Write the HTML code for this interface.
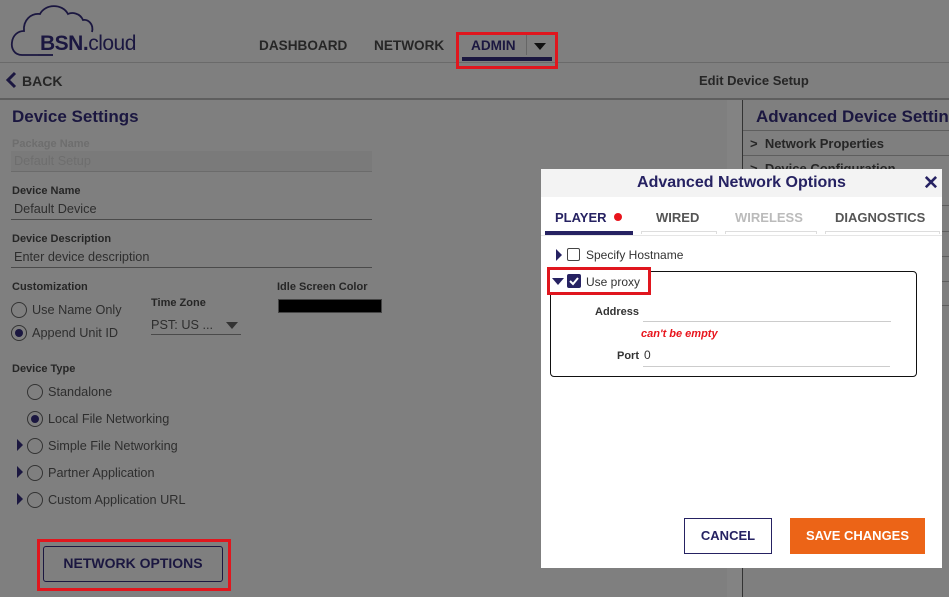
<!DOCTYPE html>
<html><head><style>
*{box-sizing:border-box;margin:0;padding:0}
body{width:949px;height:597px;overflow:hidden;background:#7f7f7f;font-family:"Liberation Sans",sans-serif;position:relative;color:#2a2a2a}
.a{position:absolute}
.lbl{font-size:11px;font-weight:bold;color:#262626}
.val{font-size:12.7px;color:#2e2e2e}
.ul{border-bottom:1px solid #4a4a4a}
.rad{width:16px;height:16px;border:1.5px solid #333;border-radius:50%;position:absolute}
.rad.on::after{content:"";position:absolute;left:2.5px;top:2.5px;width:8px;height:8px;border-radius:50%;background:#1b1740}
.tri{position:absolute;width:0;height:0;border-top:6px solid transparent;border-bottom:6px solid transparent;border-left:6px solid #1b1740}
.rt{font-size:13px;color:#2e2e2e}
</style></head><body>
<div class="a" style="left:0;top:0;width:949px;height:63px;border-bottom:1px solid #6a6a6a"></div>
<svg class="a" style="left:8px;top:2px" width="130" height="60" viewBox="0 0 130 60">
<path d="M30 53 H14 C6 53 3 46 4 40 C5 33 10 29 16 29 C15 18 23 11 32 12 C37 2 54 1 60 12 C64 10 72 11 75 18 C80 17 86 22 84 30" fill="none" stroke="#1b1740" stroke-width="1.8"/>
<path d="M30 53 H45" stroke="#1b1740" stroke-width="1.8"/>
</svg>
<div class="a" style="left:40px;top:32px;font-size:21px;color:#1b1740;letter-spacing:-0.5px"><b>BSN.</b>cloud</div>
<div class="a" style="left:259px;top:38px;font-size:13.6px;font-weight:bold;color:#262626">DASHBOARD</div>
<div class="a" style="left:374px;top:38px;font-size:13.6px;font-weight:bold;color:#262626">NETWORK</div>
<div class="a" style="left:471px;top:38px;font-size:13.6px;font-weight:bold;color:#1b1740">ADMIN</div>
<div class="a" style="left:526px;top:35px;width:1px;height:20px;background:#666"></div>
<div class="a" style="left:534px;top:43px;border-left:6px solid transparent;border-right:6px solid transparent;border-top:7px solid #111"></div>
<div class="a" style="left:462px;top:57px;width:90px;height:4px;background:#1b1740"></div>
<div class="a" style="left:456px;top:32px;width:102px;height:37px;border:3px solid #e0161e"></div>
<div class="a" style="left:0;top:98px;width:949px;height:2px;background:#5e5e5e"></div>
<svg class="a" style="left:5px;top:71px" width="12" height="18"><path d="M10 2 L3 9 L10 16" fill="none" stroke="#1b1740" stroke-width="3"/></svg>
<div class="a" style="left:22px;top:73px;font-size:14px;font-weight:bold;color:#262626">BACK</div>
<div class="a" style="left:699px;top:73px;font-size:13px;font-weight:bold;color:#262626">Edit Device Setup</div>
<div class="a" style="left:12px;top:107px;font-size:17px;font-weight:bold;color:#1b1740">Device Settings</div>
<div class="a lbl" style="left:12px;top:138px;color:#6e6e6e;font-weight:bold">Package Name</div>
<div class="a" style="left:11px;top:151px;width:361px;height:21px;background:#7a7a7a;border-bottom:1px solid #6b6b6b"></div>
<div class="a val" style="left:14px;top:154px;color:#6e6e6e">Default Setup</div>
<div class="a lbl" style="left:12px;top:185px">Device Name</div>
<div class="a val ul" style="left:11px;top:202px;width:361px;height:18px;padding-left:3px">Default Device</div>
<div class="a lbl" style="left:12px;top:233px">Device Description</div>
<div class="a val ul" style="left:11px;top:250px;width:361px;height:18px;padding-left:3px">Enter device description</div>
<div class="a lbl" style="left:12px;top:281px">Customization</div>
<div class="rad" style="left:11px;top:302px"></div><div class="a val" style="left:32px;top:303px">Use Name Only</div>
<div class="rad on" style="left:11px;top:325px"></div><div class="a val" style="left:32px;top:326px">Append Unit ID</div>
<div class="a lbl" style="left:151px;top:297px">Time Zone</div>
<div class="a val ul" style="left:151px;top:318px;width:90px;height:17px">PST: US ...</div>
<div class="a" style="left:226px;top:322px;border-left:6px solid transparent;border-right:6px solid transparent;border-top:7px solid #333"></div>
<div class="a lbl" style="left:277px;top:281px">Idle Screen Color</div>
<div class="a" style="left:278px;top:299px;width:104px;height:14px;background:#000;border:1px solid #444"></div>
<div class="a lbl" style="left:12px;top:363px">Device Type</div>
<div class="rad" style="left:27px;top:384px"></div><div class="a val" style="left:48px;top:385px">Standalone</div>
<div class="rad on" style="left:27px;top:411px"></div><div class="a val" style="left:48px;top:412px">Local File Networking</div>
<div class="tri" style="left:17px;top:439px"></div><div class="rad" style="left:27px;top:438px"></div><div class="a val" style="left:48px;top:439px">Simple File Networking</div>
<div class="tri" style="left:17px;top:466px"></div><div class="rad" style="left:27px;top:465px"></div><div class="a val" style="left:48px;top:466px">Partner Application</div>
<div class="tri" style="left:17px;top:493px"></div><div class="rad" style="left:27px;top:492px"></div><div class="a val" style="left:48px;top:493px">Custom Application URL</div>
<div class="a" style="left:37px;top:539px;width:194px;height:52px;border:3px solid #e0161e"></div>
<div class="a" style="left:43px;top:546px;width:180px;height:36px;border:1.5px solid #1b1740;border-radius:3px;font-size:14px;font-weight:bold;color:#1b1740;text-align:center;line-height:33px">NETWORK OPTIONS</div>
<div class="a" style="left:727px;top:100px;width:15px;height:497px;background:#838383"></div>
<div class="a" style="left:742px;top:100px;width:1px;height:497px;background:#333"></div>
<div class="a" style="left:756px;top:107px;font-size:17px;font-weight:bold;color:#1b1740;white-space:nowrap">Advanced Device Settings</div>
<div class="a" style="left:743px;top:130px;width:206px;height:1px;background:#5e5e5e"></div>
<div class="a rt" style="left:750px;top:136px;font-weight:bold;color:#262626">&gt;&nbsp; Network Properties</div>
<div class="a" style="left:743px;top:155px;width:206px;height:1px;background:#5e5e5e"></div>
<div class="a rt" style="left:750px;top:161px;font-weight:bold;color:#262626">&gt;&nbsp; Device Configuration</div>
<div class="a" style="left:743px;top:205px;width:206px;height:1px;background:#5e5e5e"></div>
<div class="a" style="left:743px;top:231px;width:206px;height:1px;background:#5e5e5e"></div>
<div class="a" style="left:743px;top:256px;width:206px;height:1px;background:#5e5e5e"></div>
<div class="a" style="left:743px;top:281px;width:206px;height:1px;background:#5e5e5e"></div>
<div class="a" style="left:743px;top:305px;width:206px;height:1px;background:#5e5e5e"></div>
<div class="a" style="left:541px;top:169px;width:401px;height:399px;background:#fff">
 <div class="a" style="left:0;top:0;width:401px;height:28px;background:#f3f3f3"></div>
 <div class="a" style="left:0;top:5px;width:401px;text-align:center;font-size:16px;font-weight:bold;color:#262262">Advanced Network Options</div>
 <div class="a" style="left:382px;top:3px;font-size:19px;font-weight:bold;color:#262262">✕</div>
 <div class="a" style="left:14px;top:41px;font-size:13px;font-weight:bold;color:#262262">PLAYER</div>
 <div class="a" style="left:73px;top:44px;width:8px;height:8px;border-radius:50%;background:#e8141c"></div>
 <div class="a" style="left:4px;top:62px;width:88px;height:4px;background:#262262"></div>
 <div class="a" style="left:115px;top:41px;font-size:13px;font-weight:bold;color:#555">WIRED</div>
 <div class="a" style="left:100px;top:62px;width:76px;height:3px;border:1px solid #ddd;border-bottom:0"></div>
 <div class="a" style="left:194px;top:41px;font-size:13px;font-weight:bold;color:#bbb">WIRELESS</div>
 <div class="a" style="left:184px;top:62px;width:92px;height:3px;border:1px solid #ddd;border-bottom:0"></div>
 <div class="a" style="left:294px;top:41px;font-size:13px;font-weight:bold;color:#555">DIAGNOSTICS</div>
 <div class="a" style="left:284px;top:62px;width:115px;height:3px;border:1px solid #ddd;border-bottom:0"></div>
 <div class="a" style="left:0;top:66px;width:401px;height:1px;background:#e6e6e6"></div>
 <div class="tri" style="left:15px;top:80px;border-left-color:#262262"></div>
 <div class="a" style="left:26px;top:79px;width:13px;height:13px;border:1.5px solid #444;border-radius:2px"></div>
 <div class="a" style="left:45px;top:79px;font-size:12px;color:#333">Specify Hostname</div>
 <div class="a" style="left:9px;top:102px;width:367px;height:106px;border:1.5px solid #111;border-radius:4px"></div>
 <div class="a" style="left:6px;top:98px;width:104px;height:28px;border:3px solid #e0161e;background:#fff"></div>
 <div class="a" style="left:11px;top:109px;border-left:6px solid transparent;border-right:6px solid transparent;border-top:7px solid #262262"></div>
 <div class="a" style="left:26px;top:105px;width:14px;height:14px;background:#262262;border-radius:2px"></div>
 <svg class="a" style="left:26px;top:105px" width="14" height="14"><path d="M3 7 L6 10 L11 4" fill="none" stroke="#fff" stroke-width="2"/></svg>
 <div class="a" style="left:45px;top:106px;font-size:12px;color:#333">Use proxy</div>
 <div class="a" style="left:54px;top:137px;font-size:11px;font-weight:bold;color:#333">Address</div>
 <div class="a" style="left:102px;top:152px;width:248px;height:1px;background:#ccc"></div>
 <div class="a" style="left:100px;top:159px;font-size:11px;font-style:italic;font-weight:bold;color:#e8141c">can't be empty</div>
 <div class="a" style="left:76px;top:181px;font-size:11px;font-weight:bold;color:#333">Port</div>
 <div class="a" style="left:103px;top:179px;font-size:12px;color:#333">0</div>
 <div class="a" style="left:102px;top:197px;width:247px;height:1px;background:#ccc"></div>
 <div class="a" style="left:143px;top:349px;width:88px;height:36px;border:1.5px solid #262262;font-size:13px;font-weight:bold;color:#262262;text-align:center;line-height:33px">CANCEL</div>
 <div class="a" style="left:249px;top:349px;width:135px;height:36px;background:#ec6417;font-size:13px;font-weight:bold;color:#fff;text-align:center;line-height:36px">SAVE CHANGES</div>
</div>
</body></html>
